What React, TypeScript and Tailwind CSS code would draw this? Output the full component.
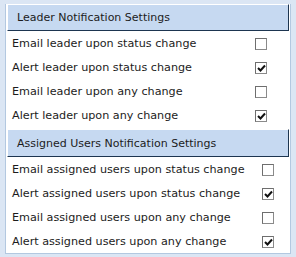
const sections = [
  {
    title: 'Leader Notification Settings',
    boxCol: 'w-[34px]',
    gap: 'mt-0',
    rows: [
      { label: 'Email leader upon status change', checked: false },
      { label: 'Alert leader upon status change', checked: true },
      { label: 'Email leader upon any change', checked: false },
      { label: 'Alert leader upon any change', checked: true },
    ],
  },
  {
    title: 'Assigned Users Notification Settings',
    boxCol: 'w-[27px]',
    gap: 'mt-px',
    rows: [
      { label: 'Email assigned users upon status change', checked: false },
      { label: 'Alert assigned users upon status change', checked: true },
      { label: 'Email assigned users upon any change', checked: false },
      { label: 'Alert assigned users upon any change', checked: true },
    ],
  },
];

function CheckBox({ checked }: { checked: boolean }) {
  return (
    <div className="w-[12px] h-[12px] border border-[#8a8a8a] border-t-[#6e6e6e] border-l-[#6e6e6e] bg-white flex items-center justify-center">
      {checked && (
        <svg width="9" height="9" viewBox="0 0 9 9">
          <path d="M1 4 L3.5 6.5 L8 1.5" fill="none" stroke="#111" strokeWidth="2" />
        </svg>
      )}
    </div>
  );
}

export default function App() {
  return (
    <div className="w-[296px] h-[257px] bg-[#dbe6f4] pl-[5px] pt-[4px] pr-[5px] pb-[3px] font-['DejaVu_Sans',sans-serif] text-[11.2px] text-[#1c1c1c] overflow-hidden">
      <div className="h-full bg-white border-l border-[#b3c8e0] border-r border-b border-r-[#b3c8e0] border-b-[#b3c8e0] pl-px pr-px flex flex-col">
        {sections.map((s, i) => (
          <div key={s.title} className={`flex flex-col ${s.gap}`}>
            <div
              className={`${i === 0 ? 'h-[27px] pt-px' : 'h-[28px] pt-[2px]'} bg-[#c6d9f1] border border-t-white border-l-white border-r-[#1d3550] border-b-[#1d3550] flex items-center pl-[9px] text-[11px]`}
            >
              {s.title}
            </div>
            <div className="flex flex-col pt-px">
              {s.rows.map((r) => (
                <div key={r.label} className="h-[24px] flex items-center pl-[5px]">
                  <span className="flex-1">{r.label}</span>
                  <div className={`${s.boxCol} flex`}>
                    <CheckBox checked={r.checked} />
                  </div>
                </div>
              ))}
            </div>
          </div>
        ))}
      </div>
    </div>
  );
}
